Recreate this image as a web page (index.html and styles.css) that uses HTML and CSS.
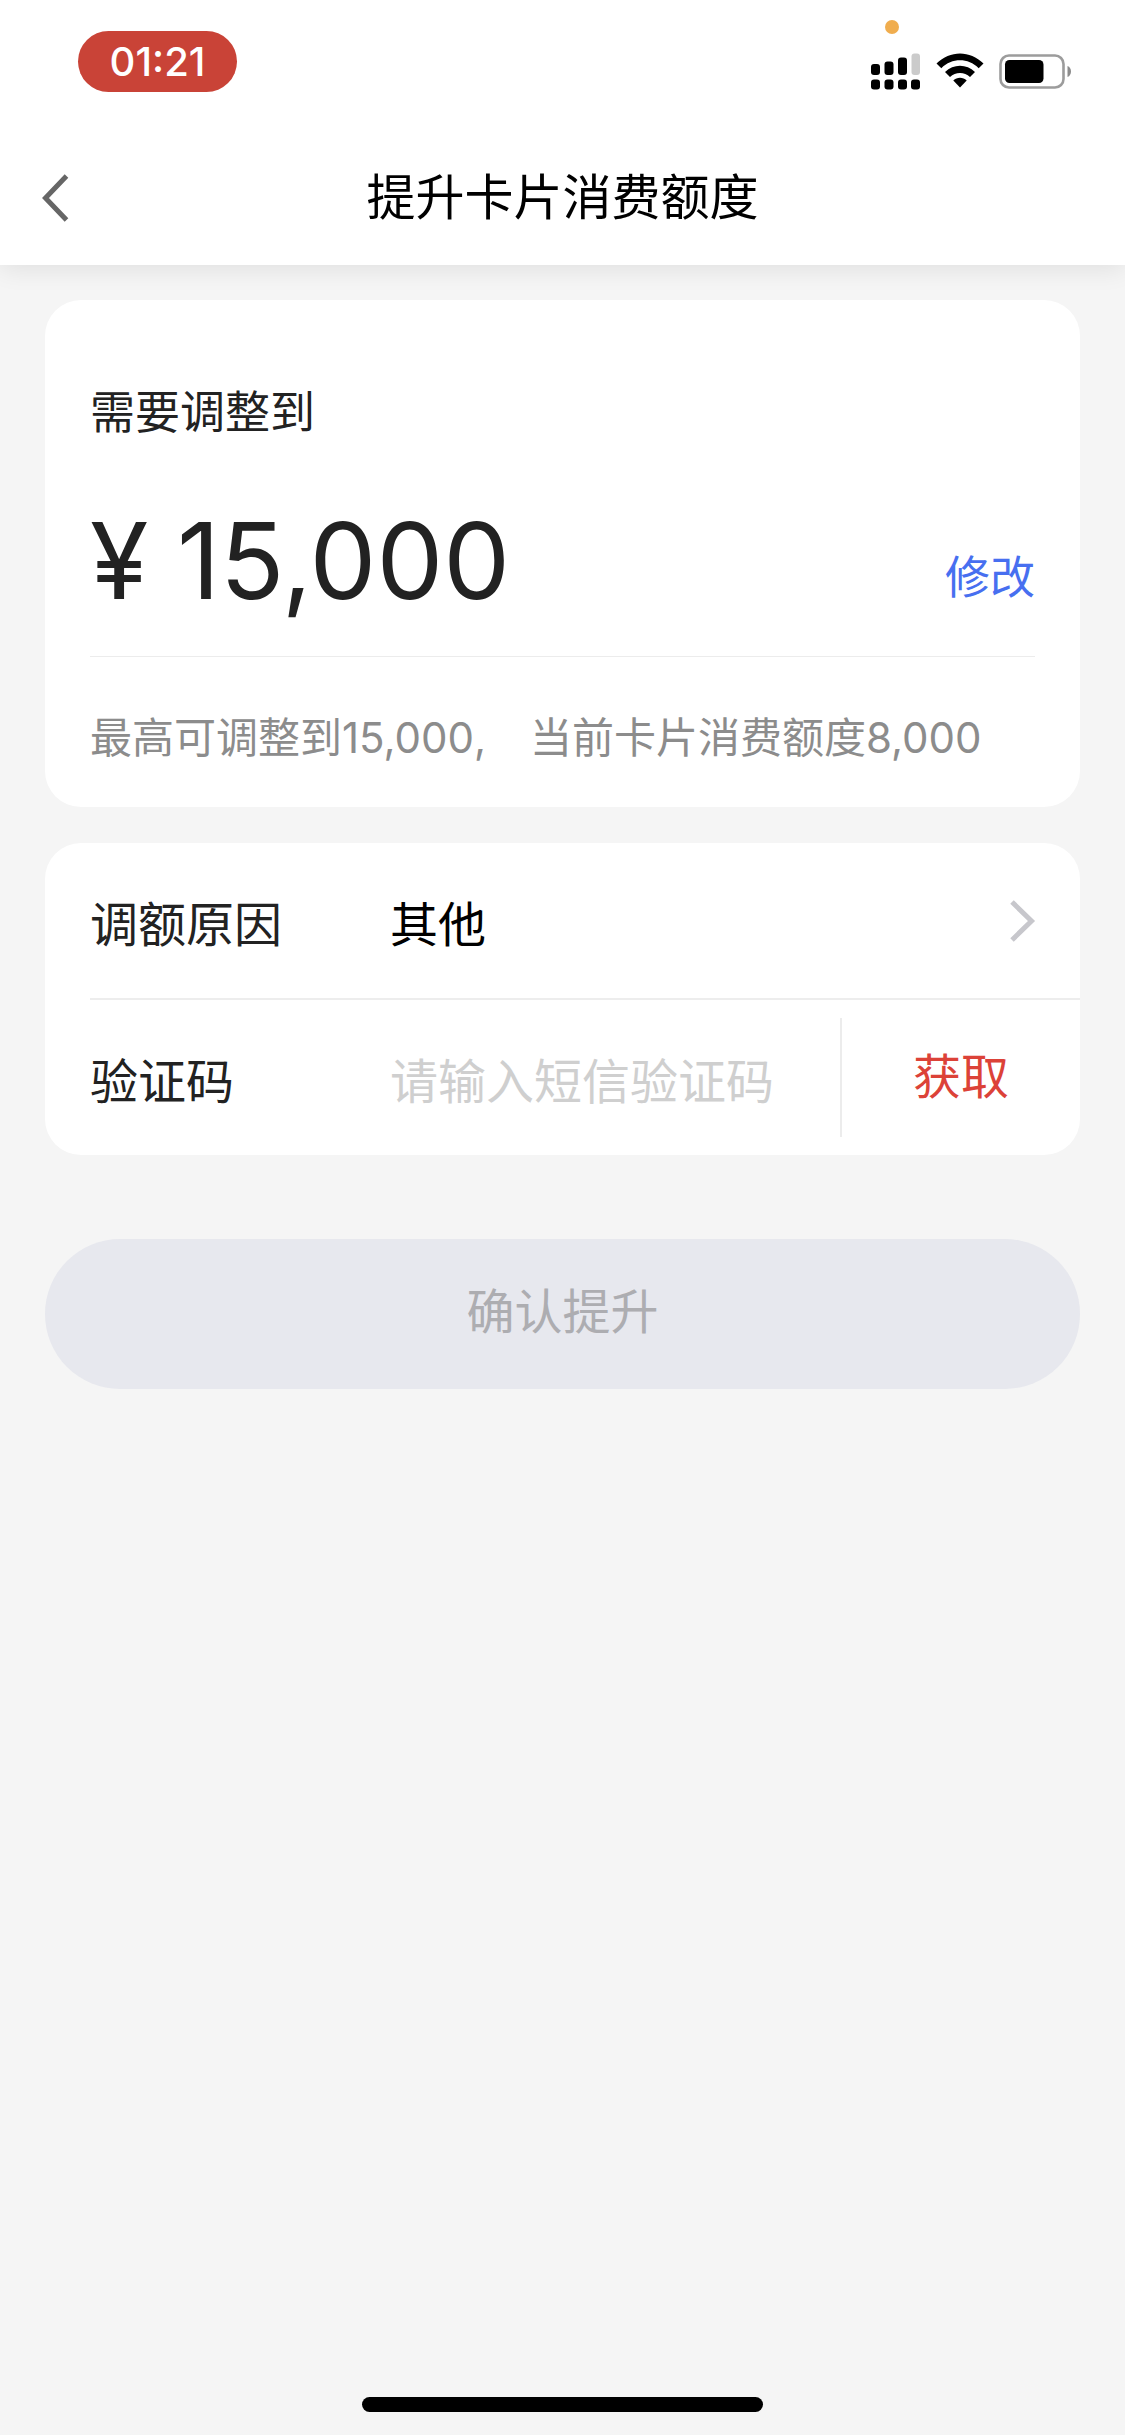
FILE: index.html
```html
<!DOCTYPE html>
<html lang="zh-CN">
<head>
<meta charset="utf-8">
<title>提升卡片消费额度</title>
<link rel="stylesheet" href="styles.css">
</head>
<body>
<div class="screen">
  <header class="header">
    <div class="status-bar">
      <span class="time-pill">01:21</span>
      <div class="status-icons">
        <span class="mic-dot"></span>
        <svg class="signal" width="50" height="37" viewBox="0 0 50 37">
          <rect x="0" y="11" width="9" height="11" rx="3"/>
          <rect x="13.500" y="8.500" width="9" height="13.500" rx="3"/>
          <rect x="27" y="4.500" width="9" height="17.500" rx="3"/>
          <rect x="40.500" y="0.500" width="8.500" height="21.500" rx="3" fill="#cbcbcb"/>
          <rect x="0" y="26.500" width="9" height="10" rx="3"/>
          <rect x="13.500" y="26.500" width="9" height="10" rx="3"/>
          <rect x="27" y="26.500" width="9" height="10" rx="3"/>
          <rect x="40" y="26.500" width="9" height="10" rx="3"/>
        </svg>
        <svg class="wifi" width="48" height="36" viewBox="0 0 48 36">
          <path d="M0.500 10.500C14 -3 34 -3 47.500 10.500L42.700 15.300C32 4.700 16 4.700 5.300 15.300Z"/>
          <path d="M9 19C17.500 10.700 30.500 10.700 39 19L34 24C28.500 18.500 19.500 18.500 14 24Z"/>
          <path d="M17.300 27.400C21 23.900 27 23.900 30.700 27.400L24 34.500Z"/>
        </svg>
        <svg class="battery" width="74" height="36" viewBox="0 0 74 36">
          <rect x="1.500" y="1.500" width="63" height="32" rx="8.500" fill="none" stroke="#9c9c9c" stroke-width="2.600"/>
          <rect x="6" y="6" width="38.500" height="23" rx="4.500"/>
          <path d="M68.500 12C73.200 13.500 73.200 21.500 68.500 23Z" fill="#8c8c8c"/>
        </svg>
      </div>
    </div>
    <nav class="nav-bar">
      <svg class="back" width="28" height="48" viewBox="0 0 28 48"><path d="M24.500 2L3.500 24L24.500 46" fill="none" stroke="#666" stroke-width="5"/></svg>
      <h1 class="title">提升卡片消费额度</h1>
    </nav>
  </header>
  <main class="content">
    <section class="card amount-card">
      <p class="amount-label">需要调整到</p>
      <div class="amount-row">
        <div class="amount"><span class="yen">¥</span><span class="value">15,000</span></div>
        <a class="edit">修改</a>
      </div>
      <p class="hint">最高可调整到15,000<span class="comma">,</span>当前卡片消费额度8,000</p>
    </section>
    <section class="card form-card">
      <div class="row">
        <span class="row-label">调额原因</span>
        <span class="row-value">其他</span>
        <svg class="chevron" width="28" height="44" viewBox="0 0 28 44"><path d="M4 3L23.500 22L4 41" fill="none" stroke="#c7c7cc" stroke-width="5"/></svg>
      </div>
      <div class="row code-row">
        <span class="row-label">验证码</span>
        <span class="row-value placeholder">请输入短信验证码</span>
        <span class="fetch">获取</span>
      </div>
    </section>
    <div class="submit">确认提升</div>
  </main>
  <footer class="home"><span class="home-bar"></span></footer>
</div>
</body>
</html>
```
FILE: styles.css
```css
* { box-sizing: border-box; }
body {
  margin: 0;
  background: #f5f5f5;
  font-family: Inter, "Noto Sans CJK SC", sans-serif;
  color: #222;
}
h1, p { margin: 0; font-weight: 400; }
.screen { display: flex; flex-direction: column; width: 1125px; height: 2435px; }

.header {
  height: 265px;
  background: #fff;
  box-shadow: 0 4px 24px rgba(0, 0, 0, 0.09);
}
.status-bar {
  display: flex;
  justify-content: space-between;
  height: 132px;
  padding: 31px 52px 0 78px;
}
.time-pill {
  width: 159px;
  height: 61px;
  border-radius: 31px;
  background: #c94337;
  color: #fff;
  font-size: 40px;
  font-weight: 500;
  line-height: 61px;
  text-align: center;
}
.status-icons { position: relative; display: flex; padding-top: 22px; }
.mic-dot {
  position: absolute;
  left: 14px;
  top: -11px;
  width: 14px;
  height: 14px;
  border-radius: 50%;
  background: #f0ad4e;
}
.wifi { margin-left: 15px; }
.battery { margin-left: 15px; margin-top: 1px; }
.nav-bar {
  display: grid;
  grid-template-columns: 80px 1fr 80px;
  align-items: center;
  height: 132px;
  padding: 0 42px;
}
.title {
  color: #000;
  font-size: 49px;
  line-height: 72px;
  text-align: center;
}

.content { flex: 1; padding: 35px 45px 0; }
.card { background: #fff; border-radius: 36px; }
.amount-card { height: 507px; padding: 80px 45px 0; }
.amount-label { font-size: 45px; line-height: 66px; }
.amount-row {
  display: flex;
  justify-content: space-between;
  height: 211px;
  border-bottom: 1px solid #ececec;
}
.amount {
  display: flex;
  align-items: baseline;
  padding-top: 51px;
  font-size: 106px;
  line-height: 128px;
}
.yen { width: 87px; }
.edit { padding-top: 99px; color: #476ff0; font-size: 45px; line-height: 66px; }
.hint { padding-top: 50px; color: #8c8c8c; font-size: 42px; line-height: 62px; white-space: nowrap; }
.comma { display: inline-block; width: 56px; }

.form-card { height: 312px; margin-top: 36px; }
.row { display: flex; align-items: center; height: 155px; margin-left: 45px; font-size: 48px; }
.row-label { width: 300px; }
.row-value { flex: 1; color: #000; }
.chevron { margin-right: 44px; }
.code-row { height: 157px; border-top: 2px solid #ededed; }
.row-value.placeholder { color: #cfcfcf; }
.fetch {
  width: 240px;
  height: 119px;
  border-left: 2px solid #ececec;
  color: #dc4238;
  line-height: 117px;
  text-align: center;
}
.submit {
  height: 150px;
  margin-top: 84px;
  border-radius: 75px;
  background: #e7e8ee;
  color: #adadb1;
  font-size: 48px;
  line-height: 146px;
  text-align: center;
}
.home { display: flex; justify-content: center; padding-bottom: 23px; }
.home-bar { width: 401px; height: 15px; border-radius: 8px; background: #000; }
```
